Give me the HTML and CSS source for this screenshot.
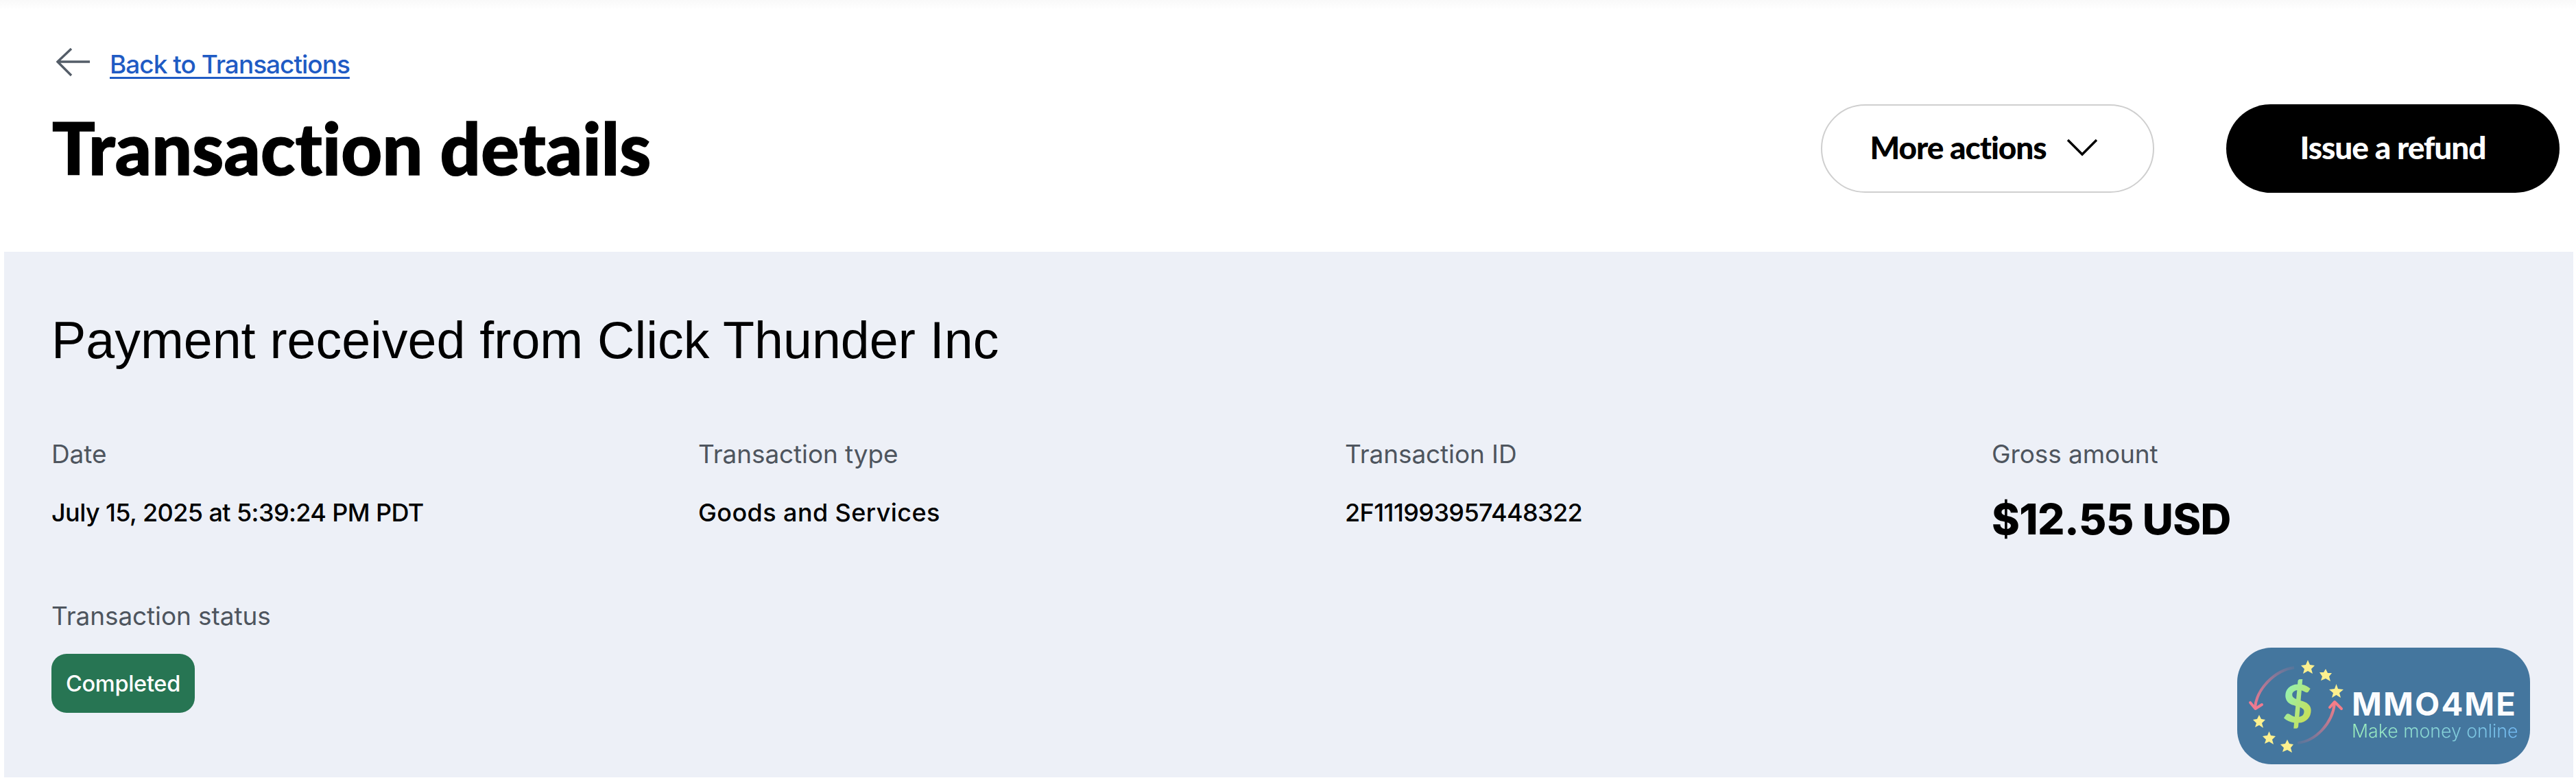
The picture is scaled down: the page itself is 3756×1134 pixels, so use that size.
FILE: index.html
```html
<!DOCTYPE html>
<html lang="en">
<head>
<meta charset="utf-8">
<title>Transaction details</title>
<link rel="stylesheet" href="styles.css">
</head>
<body>
<div class="page">
  <header class="top">
    <nav class="back">
      <svg class="back-icon" viewBox="0 0 50 42" width="50" height="42" aria-hidden="true">
        <path d="M22 1 L2 20 L22 40 M2 20 H49" fill="none" stroke="#545d68" stroke-width="3.400"/>
      </svg>
      <a class="back-link" href="#">Back to Transactions</a>
    </nav>
    <div class="title-row">
      <h1 class="title">Transaction details</h1>
      <div class="actions">
        <button class="btn btn-outline">
          <span>More actions</span>
          <svg viewBox="0 0 46 26" width="46" height="26" aria-hidden="true"><path d="M2 2 L23 23 L44 2" fill="none" stroke="#000" stroke-width="3.400"/></svg>
        </button>
        <button class="btn btn-solid">Issue a refund</button>
      </div>
    </div>
  </header>
  <main class="panel">
    <h2 class="heading">Payment received from Click Thunder Inc</h2>
    <div class="grid">
      <div class="field"><div class="label">Date</div><div class="value">July 15, 2025 at 5:39:24 PM PDT</div></div>
      <div class="field"><div class="label">Transaction type</div><div class="value value-wide">Goods and Services</div></div>
      <div class="field"><div class="label">Transaction ID</div><div class="value">2F111993957448322</div></div>
      <div class="field"><div class="label">Gross amount</div><div class="value value-big">$12.55 USD</div></div>
    </div>
    <div class="status">
      <div class="label">Transaction status</div>
      <span class="pill">Completed</span>
    </div>
    <div class="logo">
      <svg class="logo-mark" viewBox="0 0 170 170" width="170" height="170" aria-hidden="true">
        <defs>
          <linearGradient id="dollar" x1="0" y1="0" x2="1" y2="1"><stop offset="0.1" stop-color="#8cf5c0"/><stop offset="1" stop-color="#d8d93c"/></linearGradient>
          <linearGradient id="arcL" gradientUnits="userSpaceOnUse" x1="83" y1="29" x2="26" y2="89"><stop offset="0" stop-color="#f0768a" stop-opacity="0.1"/><stop offset="1" stop-color="#ef7a90"/></linearGradient>
          <linearGradient id="arcR" gradientUnits="userSpaceOnUse" x1="88" y1="139" x2="142" y2="80"><stop offset="0" stop-color="#f0768a" stop-opacity="0.1"/><stop offset="1" stop-color="#f57d88"/></linearGradient>
        </defs>
        <path d="M83 29 C55 33 28 60 26 88" fill="none" stroke="url(#arcL)" stroke-width="4"/>
        <path d="M19 80 L26.500 89 L36 83" fill="none" stroke="#ef7a90" stroke-width="4" stroke-linecap="round" stroke-linejoin="round"/>
        <path d="M88 139 C115 136 139 110 142 81" fill="none" stroke="url(#arcR)" stroke-width="4"/>
        <path d="M135 87 L142 79 L152 89" fill="none" stroke="#f57d88" stroke-width="4" stroke-linecap="round" stroke-linejoin="round"/>
        <g fill="#fdf08e">
          <polygon points="103,18 106,25 113,26 108,31 110,38 103,34 96,38 98,31 93,26 100,25"/>
          <polygon points="129,31 132,37 138,37 134,42 136,49 129,45 122,48 124,42 120,36 126,36"/>
          <polygon points="144.500,53 147,60 155,61 149,66 151,73 144.500,69 138,73 140,66 134,61 142,60"/>
          <polygon points="32,98 35,104 41,105 36,110 38,117 32,113 26,116 28,110 23,105 29,104"/>
          <polygon points="46.500,122 49,128 56,129 51,134 53,141 46.500,137 40,140 42,134 37,129 44,128"/>
          <polygon points="73,134 76,140 82,141 78,146 80,153 73,149 66,152 68,146 63,141 70,140"/>
        </g>
        <text class="logo-dollar" x="88" y="109" text-anchor="middle" fill="url(#dollar)">$</text>
      </svg>
      <div class="logo-text">
        <div class="logo-name">MMO4ME</div>
        <div class="logo-tag">Make money online</div>
      </div>
    </div>
  </main>
</div>
</body>
</html>
```
FILE: styles.css
```css
* { box-sizing: border-box; }
html, body { margin: 0; padding: 0; background: #fff; }
body { width: 3756px; height: 1134px; overflow: hidden; font-family: "Liberation Sans", Arial, sans-serif; color: #000; }
.page { display: flex; flex-direction: column; height: 1133px; }
.top { height: 367px; padding: 68px 24px 0 76px; background: linear-gradient(#f9f9f9 0, #fff 14px); flex: none; }
.back { display: flex; align-items: flex-start; gap: 28px; height: 56px; padding-left: 6px; }
.back-icon { flex: none; margin-top: 2px; }
.back-link { font-family: "Inter", sans-serif; font-weight: 500; font-size: 37px; line-height: 52px; letter-spacing: -1px; color: #1f5bc4; text-decoration: underline; text-decoration-thickness: 3px; text-underline-offset: 5px; }
.title-row { display: flex; justify-content: space-between; align-items: center; margin-top: 27px; }
.title { margin: 0 0 2px; font-family: "Lato", sans-serif; font-weight: 900; font-size: 104px; line-height: 128px; letter-spacing: 0.2px; -webkit-text-stroke: 1.5px #000; }
.actions { display: flex; gap: 105px; }
.btn { height: 129px; width: 486px; border-radius: 65px; font-family: "Lato", sans-serif; font-weight: 900; font-size: 46px; letter-spacing: -1.1px; display: flex; align-items: center; justify-content: center; padding: 0 0 3px; }
.btn-outline { background: #fff; border: 2px solid #cfcfcf; color: #000; gap: 30px; padding-right: 10px; }
.btn-solid { background: #000; border: 0; color: #fff; }
.panel { position: relative; flex: 1; margin: 0 4px 0 6px; padding: 84px 0 0 69px; background: #edf0f7; }
.heading { margin: 0; font-weight: 400; font-size: 75.4px; line-height: 90px; color: #000; }
.grid { display: grid; grid-template-columns: repeat(4, 943px); margin-top: 99px; }
.label { font-family: "Inter", sans-serif; font-size: 37px; line-height: 44px; color: #4e555e; letter-spacing: -0.1px; }
.value { font-family: "Inter", sans-serif; font-weight: 500; font-size: 36px; line-height: 44px; margin-top: 41px; letter-spacing: -0.6px; }
.value-wide { letter-spacing: 0.4px; }
.value-big { font-weight: 800; font-size: 62px; line-height: 56px; margin-top: 45px; letter-spacing: -0.6px; }
.status { margin-top: 91px; display: flex; flex-direction: column; align-items: flex-start; }
.pill { margin-top: 33px; height: 86px; padding: 0 21px; display: flex; align-items: center; background: #277553; color: #fff; font-family: "Inter", sans-serif; font-weight: 500; font-size: 32.5px; letter-spacing: -0.3px; border-radius: 22px; }
.logo { position: absolute; left: 3256px; top: 577px; width: 427px; height: 170px; border-radius: 50px; background: #44769e; display: flex; align-items: flex-start; }
.logo-mark { flex: none; }
.logo-dollar { font-family: "Lato", sans-serif; font-weight: 900; font-size: 76px; }
.logo-text { margin-left: -3px; padding-top: 60px; }
.logo-name { font-family: "Inter", sans-serif; font-weight: 700; font-size: 47px; line-height: 44px; color: #fbfcfe; letter-spacing: 2.2px; }
.logo-tag { font-family: "Inter", sans-serif; font-weight: 300; font-size: 26.7px; line-height: 34px; margin-top: 0; background: linear-gradient(90deg, #9df0bc, #72b8f0); -webkit-background-clip: text; background-clip: text; color: transparent; }
```
